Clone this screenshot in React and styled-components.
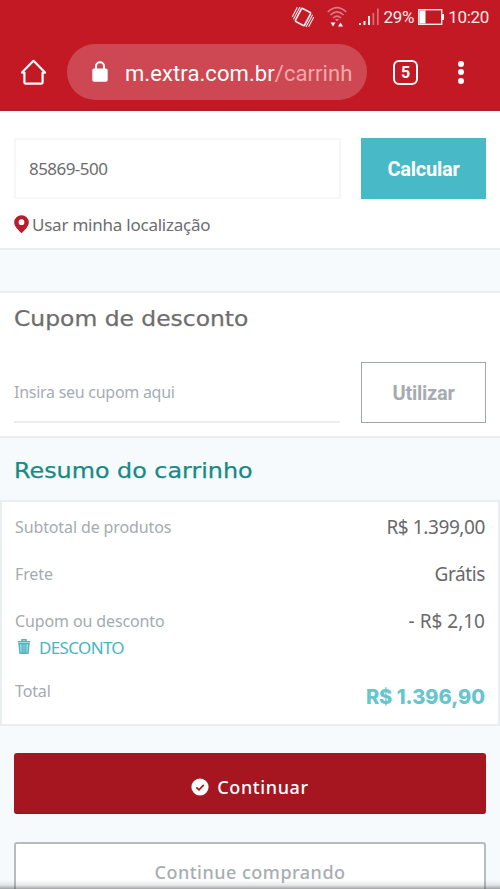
import React from "react";
import styled, { createGlobalStyle } from "styled-components";

const GlobalStyle = createGlobalStyle`
  * { box-sizing: border-box; }
  body {
    margin: 0;
    overflow: hidden;
    background: #f7fafc;
    font-family: "Noto Sans", "Open Sans", sans-serif;
  }
  button, input { font-family: inherit; margin: 0; }
`;

const Screen = styled.div`
  display: flex;
  flex-direction: column;
  position: relative;
  width: 500px;
  height: 889px;
  overflow: hidden;
  background: #f7fafc;
`;

const Header = styled.header`
  flex: none;
  height: 111px;
  background: #c21925;
  border-bottom: 1px solid #b01b27;
  color: #fff;
  font-family: Roboto, sans-serif;
`;

const StatusBar = styled.div`
  display: flex;
  align-items: center;
  justify-content: flex-end;
  height: 34px;
  padding-right: 11px;
  font-size: 17px;
  color: #fbe9e9;
  svg { flex: none; }
`;

const StatusText = styled.span`
  line-height: 20px;
  white-space: nowrap;
  letter-spacing: -0.3px;
`;

const Gap = styled.span`
  flex: none;
  width: ${(p) => p.$w}px;
`;

const BrowserBar = styled.div`
  display: flex;
  align-items: center;
  height: 56px;
  margin-top: 10px;
  padding-left: 20px;
`;

const UrlPill = styled.div`
  display: flex;
  align-items: center;
  width: 300px;
  height: 56px;
  margin: 0 26px 0 20px;
  padding-left: 25px;
  border-radius: 28px;
  background: #cd4852;
`;

const Url = styled.span`
  margin-left: 17px;
  padding-top: 2px;
  font-size: 22px;
  letter-spacing: 0.08px;
  white-space: nowrap;
  span { color: #f2a9ab; }
`;

const TabCount = styled.div`
  display: flex;
  align-items: center;
  justify-content: center;
  width: 25px;
  height: 25px;
  border: 2px solid #fff;
  border-radius: 6px;
  font-size: 16px;
  font-weight: 700;
`;

const Dots = styled.div`
  display: flex;
  flex-direction: column;
  gap: 2.5px;
  margin-left: 40px;
  span {
    width: 6px;
    height: 6px;
    border-radius: 50%;
    background: #fff;
  }
`;

const Section = styled.section`
  flex: none;
  height: ${(p) => p.$height}px;
  padding: ${(p) => p.$top}px 14px 0;
  background: #fff;
  border-bottom: 2px solid #e9eef0;
  border-top: ${(p) => (p.$line ? "2px solid #e9eef0" : "none")};
`;

const Divider = styled.div`
  flex: none;
  height: 41px;
`;

const FormRow = styled.div`
  display: flex;
  justify-content: space-between;
  margin-top: ${(p) => p.$top || 0}px;
`;

const CepInput = styled.input`
  width: 327px;
  height: 61px;
  padding: 0 13px;
  border: 2px solid #f7f7f8;
  background: #fff;
  color: #6c6c6e;
  font-size: 17px;
  letter-spacing: -0.55px;
  outline: none;
`;

const CouponInput = styled.input`
  width: 326px;
  height: 61px;
  padding: 0;
  border: 0;
  border-bottom: 2px solid #e8eef1;
  background: #fff;
  font-size: 16px;
  letter-spacing: -0.27px;
  outline: none;
  &::placeholder {
    color: #a5adb3;
    opacity: 1;
  }
`;

const SideButton = styled.button`
  width: 125px;
  height: 61px;
  padding: 0;
  border: ${(p) => (p.$outline ? "1px solid #a0a5a8" : "0")};
  background: ${(p) => (p.$outline ? "#fff" : "#48b9c7")};
  color: ${(p) => (p.$outline ? "#a5abaf" : "#fff")};
  font-family: Roboto, sans-serif;
  font-size: 20px;
  font-weight: 700;
  letter-spacing: -0.25px;
`;

const Location = styled.div`
  display: flex;
  align-items: center;
  gap: 3px;
  height: 24px;
  margin-top: 13px;
  color: #6d6d6f;
  font-size: 17px;
  letter-spacing: -0.23px;
  white-space: nowrap;
`;

const Title = styled.h2`
  margin: 0;
  height: 28px;
  line-height: 29px;
  font-family: "DejaVu Sans", sans-serif;
  font-weight: 400;
  font-size: 21px;
  color: ${(p) => p.$color};
  -webkit-text-stroke: 0.25px ${(p) => p.$color};
  white-space: nowrap;
  transform: scaleX(${(p) => p.$stretch});
  transform-origin: left;
`;

const SummaryHead = styled.div`
  flex: none;
  height: 62px;
  padding: 19px 14px 0;
`;

const Summary = styled.section`
  flex: none;
  height: 226px;
  padding: 13px 13px 0;
  border: 2px solid #e9eef0;
  background: #fff;
`;

const Line = styled.div`
  display: flex;
  align-items: center;
  justify-content: space-between;
  height: 24px;
  margin-bottom: ${(p) => p.$gap}px;
`;

const Label = styled.span`
  color: #a5abaf;
  font-size: 16px;
  white-space: nowrap;
  letter-spacing: -0.12px;
`;

const Value = styled.span`
  margin-top: -1px;
  color: #69696b;
  font-size: 19px;
  white-space: nowrap;
  letter-spacing: ${(p) => p.$spacing || "-0.4px"};
`;

const TotalValue = styled.span`
  margin-top: 11px;
  color: #67c5cb;
  font-family: Inter, sans-serif;
  font-size: 20px;
  font-weight: 800;
  white-space: nowrap;
`;

const Discount = styled.div`
  display: flex;
  align-items: center;
  gap: 8px;
  height: 24px;
  margin-bottom: 20px;
  padding-left: 2px;
  color: #48b5bf;
  font-size: 17px;
  letter-spacing: -0.65px;
`;

const Actions = styled.div`
  display: flex;
  flex-direction: column;
  gap: 28px;
  padding: 27px 14px 0;
`;

const ActionButton = styled.button`
  display: flex;
  align-items: center;
  justify-content: center;
  gap: 8px;
  flex: none;
  height: 61px;
  border-radius: 3px;
  font-size: 18px;
  font-weight: 500;
`;

const PrimaryButton = styled(ActionButton)`
  padding: 7px 0 0;
  border: 0;
  border-bottom: 1px solid #8d1720;
  background: #a51620;
  color: #fff;
  letter-spacing: 0.6px;
`;

const SecondaryButton = styled(ActionButton)`
  padding: 0 0 2px;
  border: 2px solid #b7bcbf;
  background: #fff;
  color: #a8adb0;
  letter-spacing: 0.5px;
`;

const BottomShade = styled.div`
  position: absolute;
  left: 0;
  right: 0;
  bottom: 0;
  height: 9px;
  background: linear-gradient(rgba(70, 76, 78, 0), rgba(70, 76, 78, 0.12) 55%, rgba(70, 76, 78, 0.5));
`;

const VibrateIcon = () => (
  <svg width="24" height="22" viewBox="0 0 24 22" fill="none" stroke="#fbe9e9" strokeWidth="1.1">
    <g transform="rotate(28 12 11)">
      <rect x="6.8" y="3.6" width="10.4" height="14.8" rx="1.4" strokeWidth="1.7" />
      <path d="M4.6 3.5v14M2.4 5v11M19.4 4.5v14M21.6 6v11" />
    </g>
  </svg>
);

const WifiIcon = () => (
  <svg width="20" height="22" viewBox="0 0 20 22" fill="none" stroke="#df7880" strokeWidth="1.6">
    <path d="M.8 6Q10-2.6 19.2 6M3.4 9Q10 2.8 16.6 9M6 12Q10 8.3 14 12" />
    <path d="M8 13.5Q10 11.8 12 13.5L10 15.5Z" fill="#df7880" stroke="none" />
    <path d="M3.5 16.5h5l-2.5 4zM11 20.5h5l-2.5-4z" fill="#fff" stroke="none" />
  </svg>
);

const SignalIcon = () => (
  <svg width="20" height="18" viewBox="0 0 20 18">
    <path d="M0 15h2v2H0zM4.5 13h2v4h-2zM9 8h2v9H9z" fill="#fbe9e9" />
    <path d="M13.5 5h1.7v12h-1.7zM18 .5h1.7V17H18z" fill="#dc6e76" />
  </svg>
);

const BatteryIcon = () => (
  <svg width="26" height="16" viewBox="0 0 26 16">
    <rect x=".7" y=".7" width="23" height="14.6" fill="none" stroke="#fbe9e9" strokeWidth="1.4" />
    <path d="M1.5 1.5h6v13h-6zM24 5h2v6h-2z" fill="#fff" />
  </svg>
);

const HomeIcon = () => (
  <svg width="27" height="28" viewBox="0 0 27 28" fill="none" stroke="#fff" strokeWidth="2.2" strokeLinejoin="round" strokeLinecap="round">
    <path d="M2 14.6 13.5 2.8 25 14.6h-2.4V24.6q0 1-1 1H5.4q-1 0-1-1V14.6Z" />
  </svg>
);

const LockIcon = () => (
  <svg width="16" height="22" viewBox="0 0 16 22">
    <path d="M4 9V5.2a4 4 0 0 1 8 0V9" fill="none" stroke="#fff" strokeWidth="2" />
    <rect x=".3" y="7.6" width="15.4" height="13.2" rx="1.8" fill="#fff" />
  </svg>
);

const PinIcon = () => (
  <svg width="15" height="19" viewBox="0 0 15 19">
    <path
      fillRule="evenodd"
      fill="#bb1c2c"
      d="M7.5.3A7.2 7.2 0 0 0 .2 7.4c0 3.8 3.7 7 7.3 10.8 3.6-3.8 7.3-7 7.3-10.8A7.2 7.2 0 0 0 7.5.3Zm0 4a2.9 2.9 0 1 1 0 5.8 2.9 2.9 0 0 1 0-5.8Z"
    />
  </svg>
);

const TrashIcon = () => (
  <svg width="14" height="16" viewBox="0 0 14 16" fill="none" stroke="#48b5bf">
    <path d="M5 2V.8h4V2M.8 2.8h12.4" strokeWidth="1.5" />
    <path d="M2 4.6 3 14.4h8l1-9.8Z" strokeWidth="1.4" fill="#a4dce0" />
    <path d="M5 5l.4 9M7 5v9M9 5l-.4 9" strokeWidth="1.2" />
  </svg>
);

const CheckIcon = () => (
  <svg width="18" height="18" viewBox="0 0 18 18">
    <circle cx="9" cy="9" r="8.6" fill="#fff" />
    <path d="M5.3 9.3 8 11.8l4.8-4.9" fill="none" stroke="#a51620" strokeWidth="1.7" />
  </svg>
);

const App = () => {
  return (
    <>
      <GlobalStyle />
      <Screen>
        <Header>
          <StatusBar>
            <VibrateIcon />
            <Gap $w={12} />
            <WifiIcon />
            <Gap $w={12} />
            <SignalIcon />
            <Gap $w={4} />
            <StatusText>29%</StatusText>
            <Gap $w={4} />
            <BatteryIcon />
            <Gap $w={4} />
            <StatusText>10:20</StatusText>
          </StatusBar>
          <BrowserBar>
            <HomeIcon />
            <UrlPill>
              <LockIcon />
              <Url>m.extra.com.br<span>/carrinh</span></Url>
            </UrlPill>
            <TabCount>5</TabCount>
            <Dots>
              <span />
              <span />
              <span />
            </Dots>
          </BrowserBar>
        </Header>

        <Section $height={139} $top={27}>
          <FormRow>
            <CepInput defaultValue="85869-500" />
            <SideButton>Calcular</SideButton>
          </FormRow>
          <Location>
            <PinIcon />
            Usar minha localização
          </Location>
        </Section>
        <Divider />
        <Section $height={147} $top={12} $line>
          <Title $color="#6d6d6d" $stretch={1.115}>Cupom de desconto</Title>
          <FormRow $top={29}>
            <CouponInput placeholder="Insira seu cupom aqui" />
            <SideButton $outline>Utilizar</SideButton>
          </FormRow>
        </Section>

        <SummaryHead>
          <Title $color="#168a87" $stretch={1.135}>Resumo do carrinho</Title>
        </SummaryHead>
        <Summary>
          <Line $gap={23}>
            <Label>Subtotal de produtos</Label>
            <Value>R$ 1.399,00</Value>
          </Line>
          <Line $gap={23}>
            <Label>Frete</Label>
            <Value>Grátis</Value>
          </Line>
          <Line $gap={2}>
            <Label>Cupom ou desconto</Label>
            <Value $spacing="0">- R$ 2,10</Value>
          </Line>
          <Discount>
            <TrashIcon />
            DESCONTO
          </Discount>
          <Line $gap={0}>
            <Label>Total</Label>
            <TotalValue>R$ 1.396,90</TotalValue>
          </Line>
        </Summary>

        <Actions>
          <PrimaryButton>
            <CheckIcon />
            Continuar
          </PrimaryButton>
          <SecondaryButton>Continue comprando</SecondaryButton>
        </Actions>
        <BottomShade />
      </Screen>
    </>
  );
};

export default App;
